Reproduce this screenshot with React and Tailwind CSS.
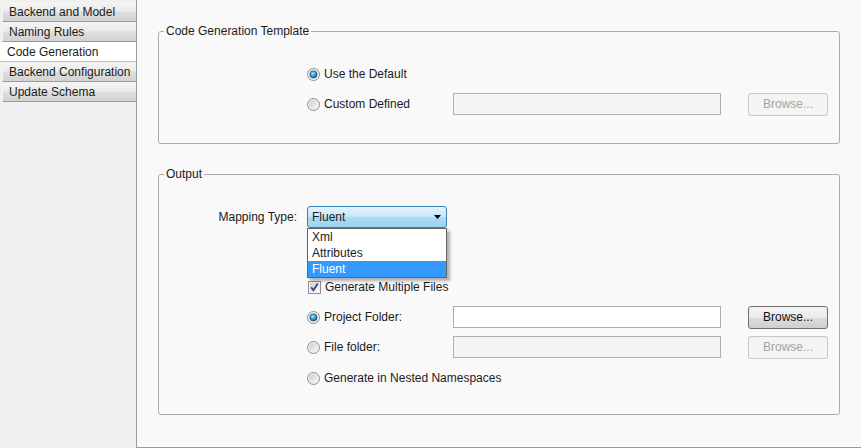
import React from 'react';

const TABS = ['Backend and Model', 'Naming Rules', 'Code Generation', 'Backend Configuration', 'Update Schema'];
const SELECTED = 'Code Generation';

function Radio({ checked, id }) {
  return (
    <svg width="13" height="13" viewBox="0 0 13 13" className="shrink-0">
      <defs>
        <linearGradient id={`rg-${id}`} x1="0" y1="0" x2="1" y2="1">
          <stop offset="0" stopColor="#cbcbcb" />
          <stop offset="1" stopColor="#fafafa" />
        </linearGradient>
        <radialGradient id={`rd-${id}`} cx="0.4" cy="0.35" r="0.75">
          <stop offset="0" stopColor="#a6e8ff" />
          <stop offset="0.45" stopColor="#34a3e2" />
          <stop offset="1" stopColor="#0e4f87" />
        </radialGradient>
      </defs>
      <circle cx="6.5" cy="6.5" r="6" fill="#f3f3f3" stroke="#8d8d8d" />
      <circle cx="6.5" cy="6.5" r="4.6" fill={`url(#rg-${id})`} />
      {checked && <circle cx="6.5" cy="6.5" r="3.6" fill={`url(#rd-${id})`} stroke="#1c4b74" strokeWidth="0.7" />}
    </svg>
  );
}

function Checkbox() {
  return (
    <svg width="13" height="13" viewBox="0 0 13 13" className="shrink-0">
      <defs>
        <linearGradient id="cb" x1="0" y1="0" x2="1" y2="1">
          <stop offset="0" stopColor="#d0d0d0" />
          <stop offset="1" stopColor="#fbfbfb" />
        </linearGradient>
      </defs>
      <rect x="0.5" y="0.5" width="12" height="12" fill="#f4f4f4" stroke="#8e8f8f" />
      <rect x="2" y="2" width="9" height="9" fill="url(#cb)" />
      <path d="M3.2 6.4 L5.4 9.2 L9.8 2.6" fill="none" stroke="#3c3f82" strokeWidth="1.8" />
    </svg>
  );
}

function Browse({ disabled }) {
  return disabled ? (
    <button className="ml-[27px] flex h-[23px] w-[80px] items-center justify-center rounded-[3px] border border-[#c5c5c5] bg-[#f4f4f4] text-[#a3a3a3]">
      Browse...
    </button>
  ) : (
    <button className="ml-[27px] flex h-[23px] w-[80px] items-center justify-center rounded-[3px] border border-[#707070] bg-[linear-gradient(#f3f3f3_0%,#ebebeb_50%,#dddddd_50%,#cfcfcf_100%)] text-[#111]">
      Browse...
    </button>
  );
}

function TextBox({ disabled }) {
  return (
    <div className={disabled
      ? 'h-[22px] w-[268px] border border-[#b0b0b0] bg-[#f4f4f4]'
      : 'h-[22px] w-[268px] border border-[#abadb3] bg-white'} />
  );
}

function RadioRow({ id, label, checked, box, disabled, className = '' }) {
  return (
    <div className={`flex h-[22px] items-center ${className}`}>
      <div className="w-[148px] shrink-0" />
      <div className="flex w-[146px] shrink-0 items-center gap-[4px] whitespace-nowrap">
        <Radio id={id} checked={checked} />
        <span>{label}</span>
      </div>
      {box && <TextBox disabled={disabled} />}
      {box && <Browse disabled={disabled} />}
    </div>
  );
}

export default function App() {
  return (
    <div className="flex h-[448px] w-[861px] bg-[#f0f0f0] font-['Liberation_Sans',Arial,sans-serif] text-[12px] text-[#1b1b1b]">
      <div className="w-[136px] shrink-0 pt-[2px]">
        {TABS.map((t) =>
          t === SELECTED ? (
            <div key={t} className="flex h-[20px] w-[136px] items-center border-b border-[#b8b8b8] bg-white pl-[7px] pt-[1px]">
              {t}
            </div>
          ) : (
            <div key={t} className="ml-[2px] flex h-[20px] w-[134px] items-center border-b border-l border-[#9c9c9c] border-l-[#f4f4f4] bg-[linear-gradient(#f4f4f4_0%,#ececec_45%,#dedede_55%,#d2d2d2_100%)] pl-[6px] pt-[1px]">
              {t}
            </div>
          )
        )}
      </div>

      <div className="h-[448px] flex-1 border-b border-l border-[#9a9a9a] bg-[#f9f9f9] px-[21px] pt-[23px]">
        <fieldset className="h-[121px] rounded-[3px] border border-[#ababab]">
          <legend className="ml-[5px] px-[2px] leading-[16px]">Code Generation Template</legend>
          <div className="flex flex-col gap-[8px] pt-[24px]">
            <RadioRow id="def" label="Use the Default" checked />
            <RadioRow id="cust" label="Custom Defined" box disabled />
          </div>
        </fieldset>

        <fieldset className="mt-[22px] h-[249px] rounded-[3px] border border-[#ababab]">
          <legend className="ml-[5px] px-[2px] leading-[16px]">Output</legend>
          <div className="flex flex-col pt-[24px]">
            <div className="flex h-[22px] items-center">
              <div className="w-[148px] shrink-0 pr-[10px] text-right">Mapping Type:</div>
              <div className="relative h-[22px] w-[140px]">
                <div className="flex h-[22px] w-full items-center justify-between rounded-[3px] border border-[#3c7fb1] bg-[linear-gradient(#e2f3fc_0%,#c8e7f8_50%,#acdcf5_50%,#9dd3f0_100%)] pl-[4px] pr-[5px]">
                  <span>Fluent</span>
                  <svg width="7" height="4" viewBox="0 0 7 4">
                    <polygon points="0,0 7,0 3.5,4" fill="#000" />
                  </svg>
                </div>
                <div className="absolute left-0 top-[22px] z-10 w-[140px] border border-[#646464] bg-white shadow-[3px_3px_3px_rgba(0,0,0,0.3)]">
                  <div className="h-[16px] pl-[4px] leading-[16px]">Xml</div>
                  <div className="h-[16px] pl-[4px] leading-[16px]">Attributes</div>
                  <div className="h-[16px] bg-[#3399ff] pl-[4px] leading-[16px] text-white">Fluent</div>
                </div>
              </div>
            </div>

            <div className="mt-[51px] flex h-[16px] items-center">
              <div className="w-[149px] shrink-0" />
              <div className="flex items-center gap-[4px]">
                <Checkbox />
                <span>Generate Multiple Files</span>
              </div>
            </div>

            <RadioRow id="proj" label="Project Folder:" checked box className="mt-[11px]" />
            <RadioRow id="file" label="File folder:" box disabled className="mt-[8px]" />
            <RadioRow id="ns" label="Generate in Nested Namespaces" className="mt-[9px]" />
          </div>
        </fieldset>
      </div>
    </div>
  );
}
